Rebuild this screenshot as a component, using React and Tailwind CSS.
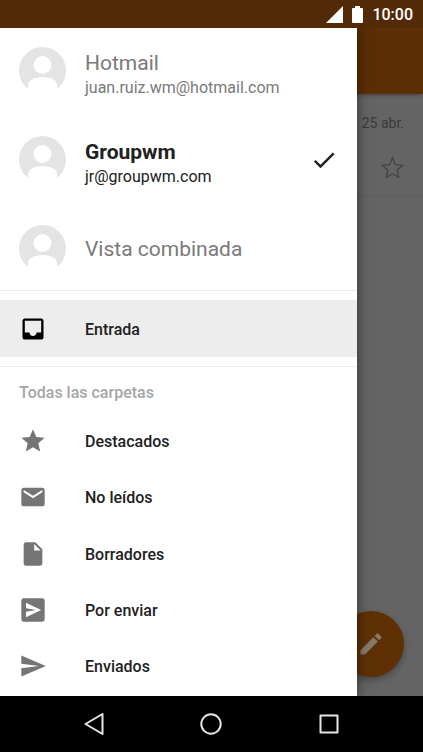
const PATHS = {
  check: 'M9 16.17L4.83 12l-1.42 1.41L9 19 21 7l-1.41-1.41z',
  inbox:
    'M19 3H4.99c-1.11 0-1.98.9-1.98 2L3 19c0 1.1.88 2 1.99 2H19c1.1 0 2-.9 2-2V5c0-1.1-.9-2-2-2zm0 12h-4c0 1.66-1.35 3-3 3s-3-1.34-3-3H4.99V5H19v10z',
  star: 'M12 17.27L18.18 21l-1.64-7.03L22 9.24l-7.19-.61L12 2 9.19 8.63 2 9.24l5.46 4.73L5.82 21z',
  mail: 'M20 4H4c-1.1 0-1.99.9-1.99 2L2 18c0 1.1.9 2 2 2h16c1.1 0 2-.9 2-2V6c0-1.1-.9-2-2-2zm0 4l-8 5-8-5V6l8 5 8-5v2z',
  file: 'M6 2c-1.1 0-1.99.9-1.99 2L4 20c0 1.1.89 2 1.99 2H18c1.1 0 2-.9 2-2V8l-6-6H6zm7 7V3.5L18.5 9H13z',
  outbox:
    'M4 2h16a2 2 0 0 1 2 2v16a2 2 0 0 1-2 2H4a2 2 0 0 1-2-2V4a2 2 0 0 1 2-2zM6 18.2L19 12 6 5.8V10.6L14.5 12 6 13.4z',
  send: 'M2.01 21L23 12 2.01 3 2 10l15 2-15 2z',
  edit: 'M3 17.25V21h3.75L17.81 9.94l-3.75-3.75L3 17.25zM20.71 7.04c.39-.39.39-1.02 0-1.41l-2.34-2.34c-.39-.39-1.02-.39-1.41 0l-1.83 1.83 3.75 3.75 1.83-1.83z',
}

function Icon({ name, className }) {
  return (
    <svg viewBox="0 0 24 24" fill="currentColor" fillRule="evenodd" aria-hidden="true" className={className}>
      <path d={PATHS[name]} />
    </svg>
  )
}

function Avatar() {
  return (
    <svg viewBox="0 0 47 47" aria-hidden="true" className="size-[47px] shrink-0">
      <circle cx="23.5" cy="23.5" r="23.5" fill="#e4e4e4" />
      <circle cx="23.5" cy="18" r="9" fill="#fff" />
      <path d="M9 48V38.500c0-5 6-8.500 14.500-8.500S38.200 33.500 38.200 38.500V48z" fill="#fff" />
    </svg>
  )
}

const accounts = [
  { name: 'Hotmail', email: 'juan.ruiz.wm@hotmail.com' },
  { name: 'Groupwm', email: 'jr@groupwm.com', selected: true },
  { name: 'Vista combinada' },
]

const folders = [
  { label: 'Destacados', icon: 'star' },
  { label: 'No leídos', icon: 'mail' },
  { label: 'Borradores', icon: 'file' },
  { label: 'Por enviar', icon: 'outbox' },
  { label: 'Enviados', icon: 'send' },
]

function StatusBar() {
  return (
    <div className="flex h-7 shrink-0 items-center justify-end bg-[#522a07] pr-[10px] text-white">
      <svg viewBox="0 0 17 17" aria-hidden="true" className="size-[17px]">
        <path d="M17 0v17H0z" fill="currentColor" />
      </svg>
      <svg viewBox="0 0 11 17" aria-hidden="true" className="ml-[9px] h-[17px] w-[11px]">
        <path d="M3 0h5v2h2a1 1 0 0 1 1 1v13a1 1 0 0 1-1 1H1a1 1 0 0 1-1-1V3a1 1 0 0 1 1-1h2z" fill="currentColor" />
      </svg>
      <time className="ml-[9px] pt-0.5 text-base leading-5 font-medium">10:00</time>
    </div>
  )
}

function Account({ name, email, selected }) {
  const tone = selected ? 'text-[#212121]' : 'text-[#7a7a7a]'
  return (
    <li>
      <button type="button" aria-pressed={!!selected} className={`flex h-[47px] w-full items-center px-[19px] text-left ${tone}`}>
        <Avatar />
        <span className={`ml-[19px] flex-1 ${email ? 'pt-2' : ''}`}>
          <span className={`block text-[21px] leading-[26px] ${selected ? 'font-bold' : 'font-normal'}`}>{name}</span>
          {email && <span className="block text-base leading-6">{email}</span>}
        </span>
        {selected && <Icon name="check" className="size-7 shrink-0" />}
      </button>
    </li>
  )
}

function Drawer() {
  return (
    <nav className="absolute inset-y-0 left-0 flex w-[357px] max-w-[85%] flex-col bg-white shadow-[0_0_12px_rgba(0,0,0,0.5)]">
      <ul className="flex flex-col gap-[42px] border-b border-[#ebebeb] pt-[19px] pb-[18px]">
        {accounts.map((a) => (
          <Account key={a.name} {...a} />
        ))}
      </ul>
      <div className="border-b border-[#ebebeb] py-[9px]">
        <a href="#entrada" aria-current="page" className="flex h-[57px] items-center bg-[#ededed] px-[19px] text-black">
          <Icon name="inbox" className="size-7" />
          <span className="ml-[38px] pt-0.5 text-base font-medium text-[#212121]">Entrada</span>
        </a>
      </div>
      <h2 className="px-[19px] pt-[14px] pb-2 text-base leading-6 font-medium text-[#a6a6a6]">Todas las carpetas</h2>
      <ul className="flex flex-1 flex-col pb-0.5">
        {folders.map((f) => (
          <li key={f.label} className="flex min-h-14 flex-1">
            <a href={`#${f.icon}`} className="flex flex-1 items-center px-[19px] text-[#757575]">
              <Icon name={f.icon} className="size-7" />
              <span className="ml-[38px] pt-0.5 text-base font-medium text-[#212121]">{f.label}</span>
            </a>
          </li>
        ))}
      </ul>
    </nav>
  )
}

function NavigationBar() {
  return (
    <div className="grid h-14 shrink-0 grid-cols-3 place-items-center bg-black px-[35px] text-[#e6e6e6]">
      <button type="button" aria-label="Atrás">
        <svg viewBox="0 0 24 24" fill="none" stroke="currentColor" strokeWidth="2" strokeLinejoin="round" className="size-6">
          <path d="M20.500 2v20L3.500 12z" />
        </svg>
      </button>
      <button type="button" aria-label="Inicio">
        <svg viewBox="0 0 24 24" fill="none" stroke="currentColor" strokeWidth="2" className="size-6">
          <circle cx="12" cy="12" r="9.700" />
        </svg>
      </button>
      <button type="button" aria-label="Recientes">
        <svg viewBox="0 0 24 24" fill="none" stroke="currentColor" strokeWidth="2" strokeLinejoin="round" className="size-6">
          <rect x="3.500" y="3.500" width="17" height="17" />
        </svg>
      </button>
    </div>
  )
}

export default function App() {
  return (
    <div className="flex min-h-screen flex-col font-[Roboto,'Liberation_Sans',sans-serif]">
      <StatusBar />
      <div className="relative flex flex-1 flex-col overflow-hidden bg-[#646464]">
        <header className="h-[66px] bg-[#5b2e05] shadow-[0_1px_4px_rgba(0,0,0,0.35)]" />
        <main>
          <article className="flex h-[103px] flex-col items-end border-b border-[#5d5d5d] pt-[19px] pr-[19px] text-[#393939]">
            <time className="text-sm leading-5">25 abr.</time>
            <button type="button" aria-label="Destacar" className="mt-[23px] text-[#444444]">
              <svg viewBox="2.5 2 19 18.200" fill="none" stroke="currentColor" strokeWidth="1.100" aria-hidden="true" className="h-[22px] w-[23px]">
                <path d="M12 3.400l2.400 5.800 6.100.500-4.700 4.100 1.400 6.100-5.200-3.200-5.200 3.200 1.400-6.100-4.700-4.100 6.100-.500z" />
              </svg>
            </button>
          </article>
        </main>
        <button
          type="button"
          aria-label="Redactar"
          className="absolute right-[19px] bottom-[19px] flex size-[66px] items-center justify-center rounded-full bg-[#5f3006] text-[#86796d] shadow-[0_3px_6px_rgba(0,0,0,0.3)]"
        >
          <Icon name="edit" className="size-7" />
        </button>
        <Drawer />
      </div>
      <NavigationBar />
    </div>
  )
}
